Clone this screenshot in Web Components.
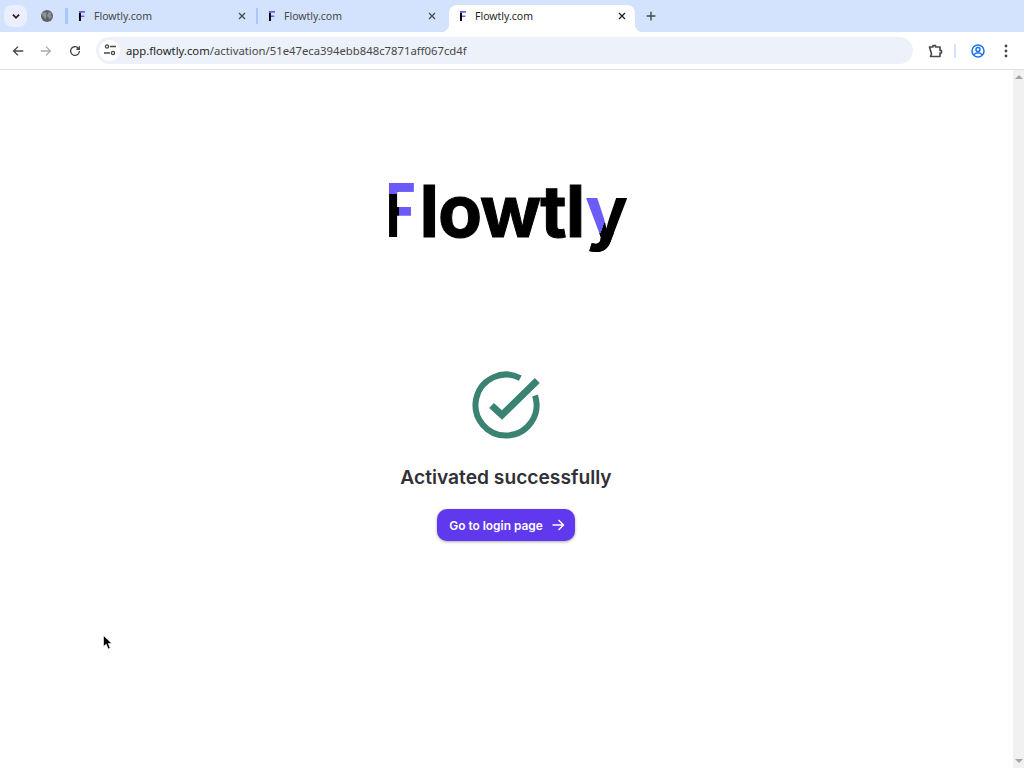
<!DOCTYPE html>
<html lang="en">
<head>
<meta charset="utf-8">
<title>Flowtly.com</title>
<style>
  html, body { margin: 0; height: 100%; overflow: hidden; background: #fff; }
  body { display: flex; flex-direction: column; font-family: "Noto Sans", sans-serif; position: relative; }
</style>
</head>
<body>
  <tab-strip>
    <browser-tab favicon="globe"></browser-tab>
    <browser-tab favicon="flowtly" closable style="width:190px">Flowtly.com</browser-tab>
    <browser-tab favicon="flowtly" closable style="width:190px">Flowtly.com</browser-tab>
    <browser-tab favicon="flowtly" closable active>Flowtly.com</browser-tab>
  </tab-strip>
  <browser-toolbar host-name="app.flowtly.com" path="/activation/51e47eca394ebb848c7871aff067cd4f"></browser-toolbar>
  <page-viewport>
    <activation-page>
      <flowtly-logo></flowtly-logo>
      <success-check></success-check>
      <activation-title>Activated successfully</activation-title>
      <login-button>Go to login page</login-button>
    </activation-page>
  </page-viewport>
  <mouse-cursor></mouse-cursor>

<script>
(function () {
  const ICONS = {
    back: '<path d="M14 8H3M8 3 3 8l5 5"/>',
    forward: '<path d="M2 8h11M8 3l5 5-5 5"/>',
    reload: '<path d="M13 8a5 5 0 1 1-1.500-3.500L13 6M13 2.500V6H9.500"/>',
    close: '<path d="M4 4l8 8M12 4l-8 8"/>',
    plus: '<path d="M8 3v10M3 8h10"/>',
    chevron: '<path d="M4.500 6.500 8 10l3.500-3.500"/>',
  };

  function icon(name, size, color, width) {
    return `<svg width="${size}" height="${size}" viewBox="0 0 16 16" fill="none" stroke="${color}" stroke-width="${width}">${ICONS[name]}</svg>`;
  }

  class TabStrip extends HTMLElement {
    constructor() {
      super();
      this.attachShadow({ mode: "open" });
      this.shadowRoot.innerHTML = `
        <style>
          :host { display: flex; height: 32px; background: #d3e3fd; flex: none; box-sizing: border-box; padding: 5px 0 0 4px; }
          .menu { width: 23px; height: 22px; border-radius: 8px; background: #e9effb; display: flex; align-items: center; justify-content: center; margin-right: 2px; }
          .tabs { display: flex; }
          .add { width: 30px; height: 22px; margin-left: 1px; display: flex; align-items: center; justify-content: center; }
        </style>
        <div class="menu">${icon("chevron", 14, "#1f1f1f", 2)}</div>
        <div class="tabs"><slot></slot></div>
        <div class="add">${icon("plus", 14, "#474747", 1.600)}</div>
      `;
    }
  }

  class BrowserTab extends HTMLElement {
    constructor() {
      super();
      this.attachShadow({ mode: "open" });
    }

    connectedCallback() {
      const active = this.hasAttribute("active");
      const fav = this.getAttribute("favicon") === "globe"
        ? `<svg class="globe" width="12" height="12" viewBox="0 0 12 12"><circle cx="6" cy="6" r="6" fill="#5f6368"/><path d="M1 3.500 4 2 6 3.500 5 5 5.500 6.500 4.500 9 3 7.500 1.500 5.500zM8 1.500l2.500 2-1 1.500 1.500 1.500-3 3-.5-2.500-1.500-1 1-2z" fill="#8d939b"/></svg>`
        : `<flowtly-favicon></flowtly-favicon>`;
      const close = this.hasAttribute("closable") ? `<span class="x">${icon("close", 12, active ? "#1f1f1f" : "#474747", 1.700)}</span>` : "";
      this.shadowRoot.innerHTML = `
        <style>
          :host { display: flex; align-items: center; box-sizing: border-box; height: 27px; width: 37px; position: relative; font: 10.500px "Noto Sans", sans-serif; color: #474747; padding: 0 8px 5px 12px; }
          :host(:not([active]))::before { content: ""; position: absolute; left: 0; top: 3px; width: 2px; height: 16px; background: #a8c7fa; }
          :host(:not([closable])) { padding-left: 12px; padding-right: 0; }
          :host(:not([closable]))::before { left: 36px; }
          :host([active]) { width: 186px; margin-left: 3px; background: #fff; border-radius: 8px 8px 0 0; color: #1f1f1f; padding-left: 10px; padding-right: 7px; }
          :host([active])::before, :host([active])::after { content: ""; position: absolute; bottom: 0; width: 8px; height: 8px; }
          :host([active])::before { left: -8px; background: radial-gradient(circle at 0 0, #d3e3fd 8px, #fff 8.500px); }
          :host([active])::after { right: -8px; background: radial-gradient(circle at 100% 0, #d3e3fd 8px, #fff 8.500px); }
          .label { flex: 1; margin-left: 9px; white-space: nowrap; }
          .x, .globe { display: flex; flex: none; }
        </style>
        ${fav}<span class="label"><slot></slot></span>${close}
      `;
    }
  }

  class FlowtlyFavicon extends HTMLElement {
    constructor() {
      super();
      this.attachShadow({ mode: "open" });
      this.shadowRoot.innerHTML = `
        <style>
          :host { display: block; width: 7px; font: 900 13px/13px Lato, sans-serif; }
          span { background-image: linear-gradient(180deg, #6c5cf7 5.500px, transparent 5.500px), linear-gradient(90deg, #000 50%, #6c5cf7 50%); -webkit-background-clip: text; background-clip: text; color: transparent; }
        </style>
        <span>F</span>
      `;
    }
  }

  class BrowserToolbar extends HTMLElement {
    constructor() {
      super();
      this.attachShadow({ mode: "open" });
    }

    connectedCallback() {
      this.shadowRoot.innerHTML = `
        <style>
          :host { display: flex; align-items: center; flex: none; height: 38px; box-sizing: border-box; background: #fff; border-bottom: 1px solid #dfe1e5; padding: 0 0 0 4px; }
          .nav { width: 28px; height: 28px; display: flex; align-items: center; justify-content: center; }
          .reload { margin-left: 1px; }
          .omni { flex: none; width: 817px; height: 27px; margin-left: 7px; margin-bottom: 1px; box-sizing: border-box; border-radius: 14px; background: #edf2fa; display: flex; align-items: center; padding-left: 3px; font: 11.300px "Noto Sans", sans-serif; color: #474747; }
          .tune { width: 21px; height: 21px; border-radius: 50%; background: #fff; display: flex; align-items: center; justify-content: center; margin-right: 6px; }
          .host { color: #1f1f1f; }
          .right { display: flex; align-items: center; margin-left: 8px; flex: none; }
          .sep { width: 2px; height: 14px; background: #d3e3fd; margin: 0 8px 0 5px; }
        </style>
        <span class="nav">${icon("back", 14, "#474747", 1.600)}</span>
        <span class="nav">${icon("forward", 14, "#a9abad", 1.500)}</span>
        <span class="nav reload">${icon("reload", 14, "#474747", 1.500)}</span>
        <div class="omni">
          <span class="tune">
            <svg width="14" height="14" viewBox="0 0 14 14" fill="none" stroke="#474747" stroke-width="1.300"><circle cx="4" cy="3.500" r="1.600"/><path d="M7 3.500h6M1 10h6"/><circle cx="10" cy="10" r="1.600"/></svg>
          </span>
          <span><span class="host">${this.getAttribute("host-name")}</span>${this.getAttribute("path")}</span>
        </div>
        <div class="right">
          <span class="nav">
            <svg width="16" height="16" viewBox="0 0 16 16" fill="none" stroke="#474747" stroke-width="1.600"><path d="M2.500 4H6V2.500h2.500V4H13v3.500h1.500V10H13v3.500H3.500L4.500 11 3.500 7.500z" stroke-linejoin="round"/></svg>
          </span>
          <span class="sep"></span>
          <span class="nav">
            <svg width="16" height="16" viewBox="0 0 16 16" fill="none" stroke="#1a73e8" stroke-width="1.500"><circle cx="8" cy="8" r="6"/><circle cx="8" cy="6.500" r="2"/><path d="M3.800 12c1-1.800 2.500-2.300 4.200-2.300s3.200.5 4.200 2.300"/></svg>
          </span>
          <span class="nav">
            <svg width="4" height="14" viewBox="0 0 4 14" fill="#474747"><circle cx="2" cy="2" r="1.400"/><circle cx="2" cy="7" r="1.400"/><circle cx="2" cy="12" r="1.400"/></svg>
          </span>
        </div>
      `;
    }
  }

  class PageViewport extends HTMLElement {
    constructor() {
      super();
      this.attachShadow({ mode: "open" });
      this.shadowRoot.innerHTML = `
        <style>
          :host { display: flex; flex: 1; min-height: 0; }
          main { flex: 1; min-width: 0; }
          .bar { width: 11px; flex: none; background: #f1f1f1; display: flex; flex-direction: column; justify-content: space-between; align-items: center; padding: 5px 0; box-sizing: border-box; }
          i { display: block; width: 0; height: 0; border-left: 4px solid transparent; border-right: 4px solid transparent; }
          .up { border-bottom: 4px solid #a3a3a3; }
          .down { border-top: 4px solid #a3a3a3; }
        </style>
        <main><slot></slot></main>
        <div class="bar"><i class="up"></i><i class="down"></i></div>
      `;
    }
  }

  class ActivationPage extends HTMLElement {
    constructor() {
      super();
      this.attachShadow({ mode: "open" });
      this.shadowRoot.innerHTML = `
        <style>
          :host { display: flex; flex-direction: column; align-items: center; padding-top: 93px; }
        </style>
        <slot></slot>
      `;
    }
  }

  class ActivationTitle extends HTMLElement {
    constructor() {
      super();
      this.attachShadow({ mode: "open" });
      this.shadowRoot.innerHTML = `
        <style>
          :host { display: block; margin: 23px 1px 0 0; font: 600 19.200px/30px Inter, sans-serif; color: #303036; white-space: nowrap; }
        </style>
        <slot></slot>
      `;
    }
  }

  class FlowtlyLogo extends HTMLElement {
    constructor() {
      super();
      this.attachShadow({ mode: "open" });
      this.shadowRoot.innerHTML = `
        <style>
          :host { display: block; height: 98px; margin-right: 1px; font: 700 72px/92px Inter, sans-serif; color: #000; letter-spacing: -1px; white-space: nowrap; -webkit-text-stroke: 1px #000; }
          span { -webkit-background-clip: text; background-clip: text; color: transparent; -webkit-text-stroke: 0; }
          .f { display: inline-block; transform: scaleX(.72); transform-origin: 0 50%; margin-right: -6px; font: 900 74px/92px Lato, sans-serif; background-image: linear-gradient(180deg, #6c5cf7 31px, transparent 31px), linear-gradient(90deg, #000 20px, #6c5cf7 20px); }
          .y { background-image: linear-gradient(180deg, transparent 66px, #000 66px), linear-gradient(110deg, #6c5cf7 54%, #000 54%); }
        </style>
        <span class="f">F</span>lowtl<span class="y">y</span>
      `;
    }
  }

  class SuccessCheck extends HTMLElement {
    constructor() {
      super();
      this.attachShadow({ mode: "open" });
      this.shadowRoot.innerHTML = `
        <style>
          :host { display: block; width: 68px; height: 68px; margin: 110px 1px 0 0; }
        </style>
        <svg width="68" height="68" viewBox="0 0 68 68" fill="none" stroke="#3a8373">
          <path d="M48.300 7.100A30.500 30.500 0 1 0 63 24.500" stroke-width="6"/>
          <path d="M19.500 34.500 30 44 65.300 9.500" stroke-width="7"/>
        </svg>
      `;
    }
  }

  class LoginButton extends HTMLElement {
    constructor() {
      super();
      this.attachShadow({ mode: "open" });
      this.shadowRoot.innerHTML = `
        <style>
          :host { display: flex; align-items: center; gap: 8px; margin: 17px 1px 0 0; height: 32px; box-sizing: border-box; padding: 0 10px 0 12px; border-radius: 10px; background: #6038ee; color: #fff; font: 600 11.900px Inter, sans-serif; box-shadow: 0 1px 3px rgba(0,0,0,.35); white-space: nowrap; }
          svg { flex: none; }
        </style>
        <slot></slot>
        <svg width="14" height="14" viewBox="0 0 14 14" fill="none" stroke="#fff" stroke-width="1.400"><path d="M1.500 7h11M7.500 2l5 5-5 5"/></svg>
      `;
    }
  }

  class MouseCursor extends HTMLElement {
    constructor() {
      super();
      this.attachShadow({ mode: "open" });
      this.shadowRoot.innerHTML = `
        <style>
          :host { position: absolute; left: 103px; top: 633px; width: 10px; height: 15px; display: block; }
        </style>
        <svg width="10" height="15" viewBox="0 0 10 15"><path d="M.5.500v11l2.700-2.400 2 4.900 2-.9-2-4.600h3.600z" fill="#000" stroke="#fff" stroke-width=".6"/></svg>
      `;
    }
  }

  customElements.define("tab-strip", TabStrip);
  customElements.define("browser-tab", BrowserTab);
  customElements.define("flowtly-favicon", FlowtlyFavicon);
  customElements.define("browser-toolbar", BrowserToolbar);
  customElements.define("page-viewport", PageViewport);
  customElements.define("activation-page", ActivationPage);
  customElements.define("activation-title", ActivationTitle);
  customElements.define("flowtly-logo", FlowtlyLogo);
  customElements.define("success-check", SuccessCheck);
  customElements.define("login-button", LoginButton);
  customElements.define("mouse-cursor", MouseCursor);
})();
</script>
</body>
</html>
